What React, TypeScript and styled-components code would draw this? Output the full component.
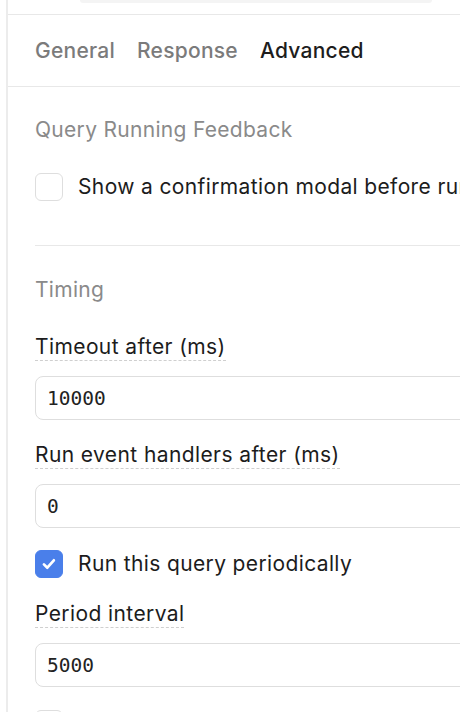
import React from 'react'
import styled, { createGlobalStyle } from 'styled-components'

const GlobalStyle = createGlobalStyle`
  html, body {
    margin: 0;
    padding: 0;
    background: #ffffff;
    overflow: hidden;
  }
  body {
    font-family: Inter, "Noto Sans", sans-serif;
    color: #1f1f1f;
  }
`

const Page = styled.div`
  display: flex;
  height: 712px;
  padding-left: 6px;
  overflow: hidden;
`

const Panel = styled.div`
  width: 640px;
  flex-shrink: 0;
  border-left: 2px solid #ececec;
`

const TopBar = styled.div`
  height: 14px;
  border-bottom: 1px solid #e8e8e8;
`

const SearchStub = styled.div`
  margin-left: 72px;
  width: 352px;
  height: 3px;
  background: #f4f4f4;
  border-radius: 0 0 10px 10px;
`

const Tabs = styled.div`
  display: flex;
  align-items: center;
  gap: 22px;
  height: 70px;
  padding: 1px 27px 0;
  border-bottom: 1px solid #e8e8e8;
`

const Tab = styled.div<{ $active?: boolean }>`
  font-size: 21px;
  line-height: 28px;
  font-weight: 500;
  letter-spacing: 0.25px;
  color: ${(p) => (p.$active ? '#1d1d1d' : '#7b7b7b')};
`

const Content = styled.div`
  padding: 29px 27px 0;
  display: flex;
  flex-direction: column;
`

const SectionTitle = styled.div`
  font-size: 21px;
  line-height: 28px;
  letter-spacing: 0.3px;
  color: #8a8a8a;
`

const CheckRow = styled.label<{ $top: number }>`
  display: flex;
  align-items: center;
  gap: 15px;
  margin-top: ${(p) => p.$top}px;
  font-size: 21px;
  line-height: 28px;
  letter-spacing: 0.37px;
  color: #1c1c1c;
  white-space: nowrap;
`

const Box = styled.span<{ $checked?: boolean }>`
  flex-shrink: 0;
  width: 28px;
  height: 28px;
  box-sizing: border-box;
  border-radius: 6px;
  display: flex;
  align-items: center;
  justify-content: center;
  border: 1px solid ${(p) => (p.$checked ? '#4a7fea' : '#dedede')};
  background: ${(p) => (p.$checked ? '#4a7fea' : '#ffffff')};
`

const Divider = styled.div`
  height: 1px;
  background: #e8e8e8;
  margin: 44px 0 30px;
`

const Field = styled.div<{ $top: number }>`
  display: flex;
  flex-direction: column;
  align-items: flex-start;
  margin-top: ${(p) => p.$top}px;
`

const Label = styled.span`
  font-size: 21px;
  line-height: 26px;
  letter-spacing: 0.4px;
  color: #1c1c1c;
  border-bottom: 1px dashed #cfcfcf;
`

const Input = styled.div`
  align-self: stretch;
  box-sizing: border-box;
  height: 44px;
  margin-top: 15px;
  padding: 0 11px;
  display: flex;
  align-items: center;
  border: 1px solid #dedede;
  border-radius: 8px;
  font-family: "DejaVu Sans Mono", "Liberation Mono", monospace;
  font-size: 19.5px;
  color: #222222;
`

const Check = () => (
  <svg width="18" height="18" viewBox="0 0 16 16" fill="none">
    <path
      d="M3.5 8.3l3 3 5.8-6.6"
      stroke="#ffffff"
      strokeWidth="2.4"
      strokeLinecap="round"
      strokeLinejoin="round"
    />
  </svg>
)

export default function App() {
  return (
    <>
      <GlobalStyle />
      <Page>
        <Panel>
          <TopBar>
            <SearchStub />
          </TopBar>
          <Tabs>
            <Tab>General</Tab>
            <Tab>Response</Tab>
            <Tab $active>Advanced</Tab>
          </Tabs>
          <Content>
            <SectionTitle>Query Running Feedback</SectionTitle>
            <CheckRow $top={29}>
              <Box />
              Show a confirmation modal before running
            </CheckRow>
            <Divider />
            <SectionTitle>Timing</SectionTitle>
            <Field $top={30}>
              <Label>Timeout after (ms)</Label>
              <Input>10000</Input>
            </Field>
            <Field $top={22}>
              <Label>Run event handlers after (ms)</Label>
              <Input>0</Input>
            </Field>
            <CheckRow $top={22}>
              <Box $checked>
                <Check />
              </Box>
              Run this query periodically
            </CheckRow>
            <Field $top={23}>
              <Label>Period interval</Label>
              <Input>5000</Input>
            </Field>
            <CheckRow $top={23}>
              <Box />
              Disable query
            </CheckRow>
          </Content>
        </Panel>
      </Page>
    </>
  )
}
